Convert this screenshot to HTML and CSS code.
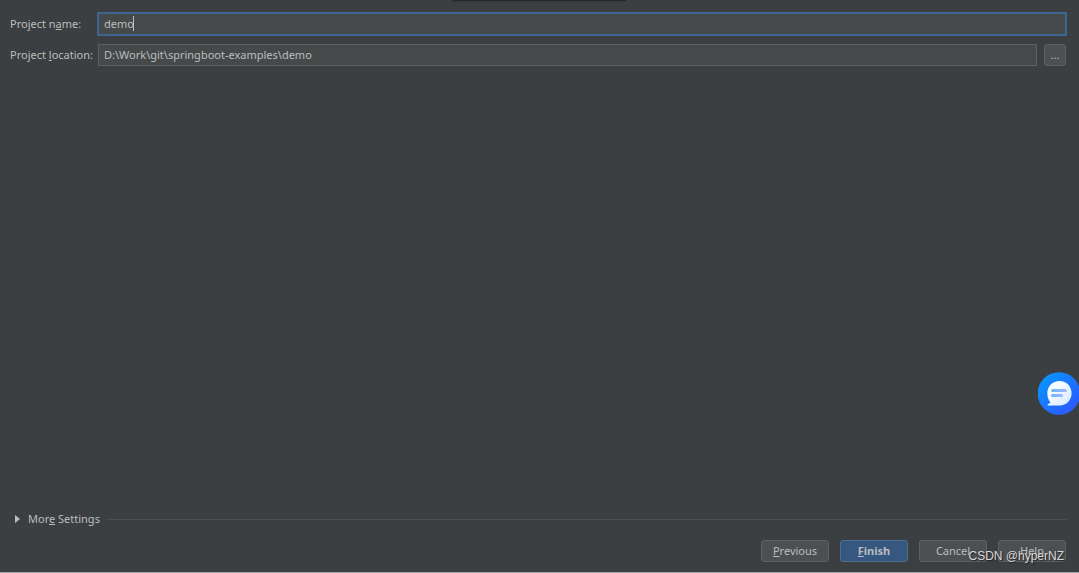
FILE: index.html
```
<!DOCTYPE html>
<html lang="en">
<head>
    <meta charset="UTF-8">
    <meta name="viewport" content="width=device-width, initial-scale=1.0">
    <title>New Project</title>
    <link rel="stylesheet" href="styles.css">
</head>
<body>
    <form class="dialog">
        <div class="top-handle"></div>
        <main class="fields">
            <label for="projectName">Project n<u>a</u>me:</label>
            <div class="name-field">
                <input type="text" id="projectName" class="active" value="demo">
                <span class="caret"></span>
            </div>
            <label for="projectLocation">Project <u>l</u>ocation:</label>
            <div class="location-field">
                <input type="text" id="projectLocation" value="D:\Work\git\springboot-examples\demo">
                <button type="button" class="browse" aria-label="Browse">...</button>
            </div>
        </main>
        <div class="more">
            <button type="button" class="more-toggle">
                <svg width="6" height="8" viewBox="0 0 6 8"><path d="M0 0L5 4L0 8Z" fill="#bbbdbf"/></svg>
                <span>Mor<u>e</u> Settings</span>
            </button>
            <div class="line"></div>
        </div>
        <footer class="buttons">
            <button type="button"><u>P</u>revious</button>
            <button type="submit" class="primary"><u>F</u>inish</button>
            <button type="button">Cancel</button>
            <button type="button">Help</button>
        </footer>
        <div class="watermark">CSDN @hyperNZ</div>
        <button type="button" class="chat" aria-label="Chat">
            <svg width="41" height="43" viewBox="0 0 41 43">
                <defs>
                    <linearGradient id="chatBg" x1="0" y1="0" x2="1" y2="1">
                        <stop offset="0.15" stop-color="#0a91ff"/>
                        <stop offset="0.85" stop-color="#2b5bff"/>
                    </linearGradient>
                    <linearGradient id="bubble" x1="0" y1="0" x2="1" y2="1">
                        <stop offset="0" stop-color="#ffffff"/>
                        <stop offset="0.4" stop-color="#f4f9ff"/>
                        <stop offset="1" stop-color="#d5e8ff"/>
                    </linearGradient>
                    <linearGradient id="stroke" x1="0" y1="0" x2="1" y2="0">
                        <stop offset="0" stop-color="#6ab5ff"/>
                        <stop offset="1" stop-color="#a5b7ff"/>
                    </linearGradient>
                </defs>
                <circle cx="21" cy="21.5" r="21.3" fill="url(#chatBg)"/>
                <path d="M21.5 9C28.5 9 33.6 14.4 33.6 21.2S28.5 33.4 21.5 33.4H10.5C9.4 33.4 9.3 32.2 10.3 31.9L12.5 30.4C10.3 28 9.3 24.8 9.3 21.2C9.3 14.4 14.6 9 21.5 9Z" fill="url(#bubble)"/>
                <rect x="13" y="17" width="16" height="3" rx="1.5" fill="url(#stroke)"/>
                <rect x="13" y="22" width="12" height="3" rx="1.5" fill="url(#stroke)"/>
            </svg>
        </button>
    </form>
</body>
</html>
```

FILE: styles.css
```
* {
    box-sizing: border-box;
}

body {
    margin: 0;
    background-color: #3c3f41;
    color: #bbbdbf;
    font-family: 'Noto Sans', 'Segoe UI', sans-serif;
    font-size: 11px;
    line-height: 16px;
}

.dialog {
    position: relative;
    display: flex;
    flex-direction: column;
    min-height: 100vh;
    padding: 12px 12px 10px 10px;
    border-bottom: 1px solid #a3a4a5;
    overflow: hidden;
}

/* edge of the window above */
.top-handle {
    position: absolute;
    top: 0;
    left: 42%;
    right: 42%;
    height: 1px;
    background-color: #242628;
    box-shadow: 0 0 3px #242628;
}

.fields {
    display: grid;
    grid-template-columns: 82px 1fr;
    align-items: center;
    column-gap: 5px;
    row-gap: 8px;
    flex: 1;
    align-content: start;
}

label {
    white-space: nowrap;
}

input {
    display: block;
    width: 100%;
    height: 22px;
    padding: 0 5px 1px;
    border: 1px solid #5e6162;
    background-color: #45494a;
    color: #bbbdbf;
    font: inherit;
    outline: none;
}

input.active {
    height: 24px;
    border: 2px solid #3d6593;
}

.name-field {
    position: relative;
}

.caret {
    position: absolute;
    top: 4px;
    left: 36px;
    width: 1px;
    height: 15px;
    background-color: #bbbdbf;
}

.location-field {
    display: flex;
    gap: 7px;
    padding: 0 1px;
}

button {
    padding: 0;
    border: 1px solid #5e6162;
    border-radius: 3px;
    background-color: #4c5052;
    color: #bbbdbf;
    font: inherit;
    cursor: pointer;
}

.browse {
    flex: none;
    width: 22px;
    height: 22px;
}

.more {
    display: flex;
    align-items: center;
    gap: 6px;
    padding-left: 5px;
    margin-bottom: 13px;
}

.more-toggle {
    display: flex;
    align-items: center;
    gap: 7px;
    border: none;
    background: none;
}

.line {
    flex: 1;
    height: 1px;
    background-color: #4b4e50;
}

.buttons {
    display: flex;
    justify-content: flex-end;
    gap: 11px;
    padding-right: 1px;
}

.buttons button {
    width: 68px;
    height: 22px;
    line-height: 20px;
}

.buttons .primary {
    border-color: #4c708c;
    background-color: #365880;
    font-weight: bold;
}

.watermark {
    position: absolute;
    right: 15px;
    bottom: 8px;
    color: #d6d7d8;
    font-family: 'Liberation Sans', Arial, sans-serif;
    font-size: 12px;
    text-shadow: 1px 1px 1px #222;
    pointer-events: none;
}

.chat {
    position: absolute;
    top: 372px;
    right: 0;
    width: 41px;
    height: 43px;
    border: none;
    background: none;
}

.chat svg {
    display: block;
}
```
